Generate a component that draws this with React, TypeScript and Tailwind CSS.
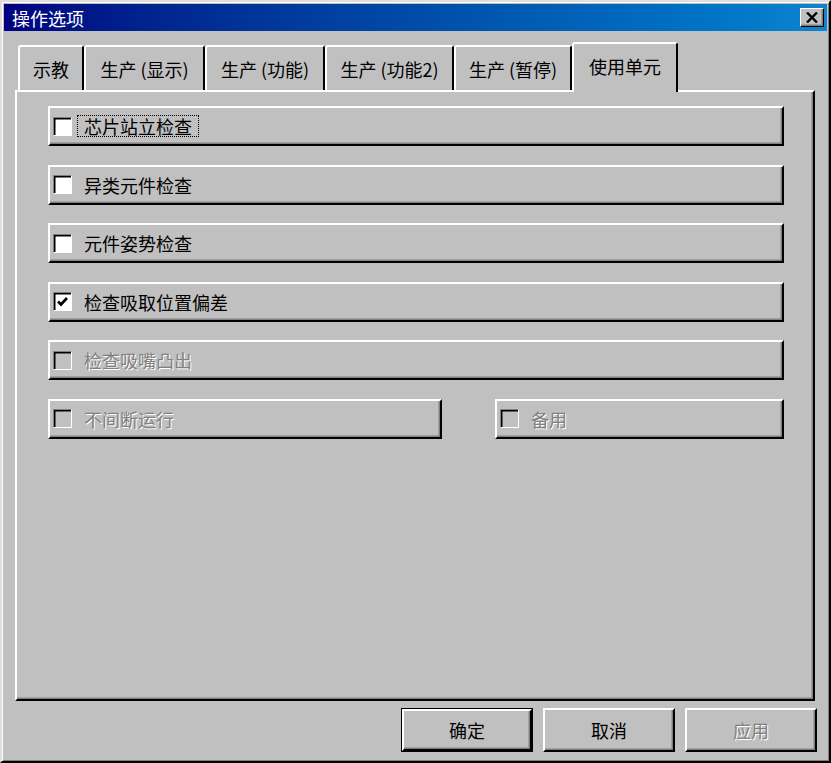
import type { ReactNode } from 'react';

const font = { fontFamily: '"Noto Sans CJK SC", "Liberation Sans", sans-serif' };

const raised =
  'border-2 border-t-white border-l-white border-r-black border-b-black shadow-[inset_-1.5px_-1.5px_0_#808080]';

function Check({ checked, disabled }: { checked?: boolean; disabled?: boolean }) {
  return (
    <span
      className={`flex h-[19px] w-[19px] shrink-0 items-center justify-center border-[1.5px] border-t-[#808080] border-l-[#808080] border-r-white border-b-white shadow-[inset_1.5px_1.5px_0_#000] ${
        disabled ? 'bg-[#c0c0c0]' : 'bg-white'
      }`}
    >
      {checked && (
        <svg width="13" height="12" viewBox="0 0 13 12">
          <path d="M2 5.5 L5 8.5 L11 2" fill="none" stroke="#000" strokeWidth="2.6" />
        </svg>
      )}
    </span>
  );
}

function Option({
  label,
  checked,
  disabled,
  focused,
  className = '',
}: {
  label: string;
  checked?: boolean;
  disabled?: boolean;
  focused?: boolean;
  className?: string;
}) {
  return (
    <div className={`flex h-[40px] items-center pl-[3px] ${raised} ${className}`}>
      <Check checked={checked} disabled={disabled} />
      <span
        className={`ml-[5px] border border-dotted px-[6px] text-[18px] leading-[20px] ${
          focused ? 'border-black' : 'border-transparent'
        } ${disabled ? 'text-[#808080] [text-shadow:1px_1px_0_#fff]' : 'text-black'}`}
      >
        {label}
      </span>
    </div>
  );
}

function Tab({ children, width, active }: { children: ReactNode; width: number; active?: boolean }) {
  return (
    <div
      style={{ width }}
      className={`flex items-start justify-center rounded-t-[3px] border-2 border-b-0 border-t-white border-l-white border-r-black bg-[#c0c0c0] text-[18px] text-black ${
        active ? 'relative z-10 h-[50px] pt-[9px]' : 'mb-[2px] h-[45px] pt-[9px]'
      }`}
    >
      {children}
    </div>
  );
}

function Button({ children, isDefault, disabled }: { children: ReactNode; isDefault?: boolean; disabled?: boolean }) {
  return (
    <div className={`h-[44px] w-[132px] ${isDefault ? 'border-[1.5px] border-black' : ''}`}>
      <div
        className={`flex h-full w-full items-center justify-center ${raised} text-[18px] ${
          disabled ? 'text-[#808080] [text-shadow:1px_1px_0_#fff]' : 'text-black'
        }`}
      >
        {children}
      </div>
    </div>
  );
}

export default function App() {
  return (
    <div
      style={font}
      className="flex h-[763px] w-[831px] flex-col border-2 border-t-[#dfdfdf] border-l-[#dfdfdf] border-r-black border-b-black bg-[#c0c0c0] p-[2px] shadow-[inset_1px_1px_0_#fff,inset_-1px_-1px_0_#808080]"
    >
      {/* title bar */}
      <div className="flex h-[27px] shrink-0 items-center justify-between bg-gradient-to-r from-[#000080] to-[#1084d0] pl-[8px] pr-[3px]">
        <span className="text-[18px] leading-none text-white">操作选项</span>
        <div className={`flex h-[19px] w-[24px] items-center justify-center bg-[#c0c0c0] ${raised} border-[1.5px]`}>
          <svg width="12" height="11" viewBox="0 0 12 11">
            <path d="M1 0.5 L11 10.5 M11 0.5 L1 10.5" stroke="#000" strokeWidth="2.4" />
          </svg>
        </div>
      </div>

      <div className="flex flex-1 flex-col pl-[11px] pr-[12px] pt-[11px]">
        {/* tabs */}
        <div className="relative z-10 -mb-[2px] flex h-[50px] items-end pl-[3px]">
          <Tab width={66}>示教</Tab>
          <Tab width={121}>生产 (显示)</Tab>
          <Tab width={120}>生产 (功能)</Tab>
          <Tab width={129}>生产 (功能2)</Tab>
          <Tab width={118}>生产 (暂停)</Tab>
          <Tab width={106} active>
            使用单元
          </Tab>
        </div>

        {/* panel */}
        <div className="flex h-[611px] flex-col gap-[18.6px] border-2 border-t-white border-l-white border-r-black border-b-black pl-[31px] pr-[29px] pt-[14px] shadow-[inset_-1.5px_-1.5px_0_#808080]">
          <Option label="芯片站立检查" focused />
          <Option label="异类元件检查" />
          <Option label="元件姿势检查" />
          <Option label="检查吸取位置偏差" checked />
          <Option label="检查吸嘴凸出" disabled />
          <div className="flex gap-[53px]">
            <Option label="不间断运行" disabled className="w-[394px]" />
            <Option label="备用" disabled className="w-[289px]" />
          </div>
        </div>

        {/* buttons */}
        <div className="-mr-[2px] mt-[7px] flex justify-end gap-[10px]">
          <Button isDefault>确定</Button>
          <Button>取消</Button>
          <Button disabled>应用</Button>
        </div>
      </div>
    </div>
  );
}
